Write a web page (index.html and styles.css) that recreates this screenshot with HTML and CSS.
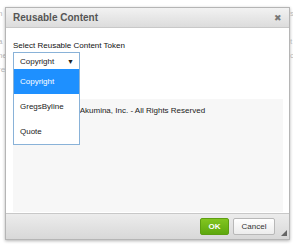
FILE: index.html
```html
<!DOCTYPE html>
<html>
<head>
<meta charset="utf-8">
<link rel="stylesheet" href="styles.css">
</head>
<body>
<div class="page">
  <div class="bg-left">
    <span class="l1">n</span><span class="l2">a</span><span>ne</span><span>re</span>
  </div>
  <div class="dialog">
    <div class="header">
      <span class="title">Reusable Content</span>
      <span class="close">&#x2716;</span>
    </div>
    <div class="body">
      <div class="label">Select Reusable Content Token</div>
      <div class="select-wrap">
        <div class="select"><span>Copyright</span><span class="arrow">&#9660;</span></div>
        <ul class="options">
          <li class="active">Copyright</li>
          <li>GregsByline</li>
          <li>Quote</li>
        </ul>
      </div>
      <div class="preview">© 2017 Akumina, Inc. - All Rights Reserved</div>
    </div>
    <div class="footer">
      <button class="ok">OK</button>
      <button class="cancel">Cancel</button>
      <span class="grip"></span>
    </div>
  </div>
  <div class="bg-right">
    <span class="l1">s</span><span class="l2">t</span><span>c</span>
  </div>
</div>
</body>
</html>
```
FILE: styles.css
```css
html, body { margin: 0; padding: 0; }
body {
  background: #fff;
  font-family: "Liberation Sans", Arial, sans-serif;
  font-size: 8px;
  color: #222;
  width: 293px;
  height: 244px;
  overflow: hidden;
}
.page { position: relative; width: 293px; height: 244px; }
.bg-left, .bg-right {
  position: absolute;
  display: flex;
  flex-direction: column;
  color: #b8b8b8;
  font-size: 8px;
  line-height: 10px;
  gap: 4px;
}
.bg-left { left: -2px; top: 9px; }
.bg-right { left: 290px; top: 9px; }
.l1 { margin-bottom: 14px; }
.dialog {
  position: absolute;
  left: 5px;
  top: 7px;
  width: 283px;
  height: 231px;
  border: 1px solid #b5b5b5;
  background: #fff;
  box-shadow: 0 1px 3px rgba(0,0,0,0.3);
  display: flex;
  flex-direction: column;
}
.header {
  height: 19px;
  background: linear-gradient(#f2f2f2, #dcdcdc);
  border-bottom: 1px solid #c8c8c8;
  display: flex;
  align-items: center;
  justify-content: space-between;
  padding: 0 7px 0 7px;
}
.title { font-size: 10px; font-weight: bold; color: #555; }
.close { font-size: 9px; color: #777; }
.body {
  flex: 1;
  padding: 12px 6px 0 7px;
  position: relative;
}
.label { font-size: 8px; color: #111; line-height: 11px; }
.select-wrap { position: relative; width: 67px; height: 17px; margin-top: 1px; }
.select {
  box-sizing: border-box;
  height: 17px;
  border: 1px solid #89b2d8;
  border-bottom: none;
  display: flex;
  align-items: center;
  justify-content: space-between;
  padding: 0 5px 0 6px;
  font-size: 8px;
  color: #222;
  background: #fff;
}
.arrow { font-size: 7px; color: #222; }
.options {
  position: absolute;
  left: 0;
  top: 17px;
  width: 67px;
  box-sizing: border-box;
  margin: 0;
  padding: 0;
  list-style: none;
  background: #fff;
  border: 1px solid #89b2d8;
  border-top: none;
  z-index: 2;
}
.options li {
  height: 25px;
  line-height: 25px;
  padding-left: 6px;
  font-size: 8px;
  color: #222;
}
.options li.active { background: #1e90ff; color: #fff; }
.preview {
  margin-top: 30px;
  height: 113px;
  background: #f7f7f7;
  padding: 7px 0 0 39px;
  box-sizing: border-box;
  font-size: 8px;
  color: #222;
}
.footer {
  height: 25px;
  border-top: 1px solid #c8c8c8;
  background: linear-gradient(#ececec, #d8d8d8);
  display: flex;
  align-items: center;
  justify-content: flex-end;
  padding-right: 14px;
  gap: 4px;
  position: relative;
}
button {
  font-family: "Liberation Sans", Arial, sans-serif;
  font-size: 8px;
  height: 17px;
  border-radius: 2px;
  padding: 0;
  margin: 0;
}
.ok {
  width: 29px;
  background: linear-gradient(#82c520, #5ea80e);
  border: 1px solid #5d9e12;
  color: #fff;
  font-weight: bold;
}
.cancel {
  width: 42px;
  background: linear-gradient(#fff, #ececec);
  border: 1px solid #b8b8b8;
  color: #333;
}
.grip {
  position: absolute;
  right: 2px;
  bottom: 3px;
  width: 0;
  height: 0;
  border-left: 6px solid transparent;
  border-bottom: 6px solid #666;
}
```
